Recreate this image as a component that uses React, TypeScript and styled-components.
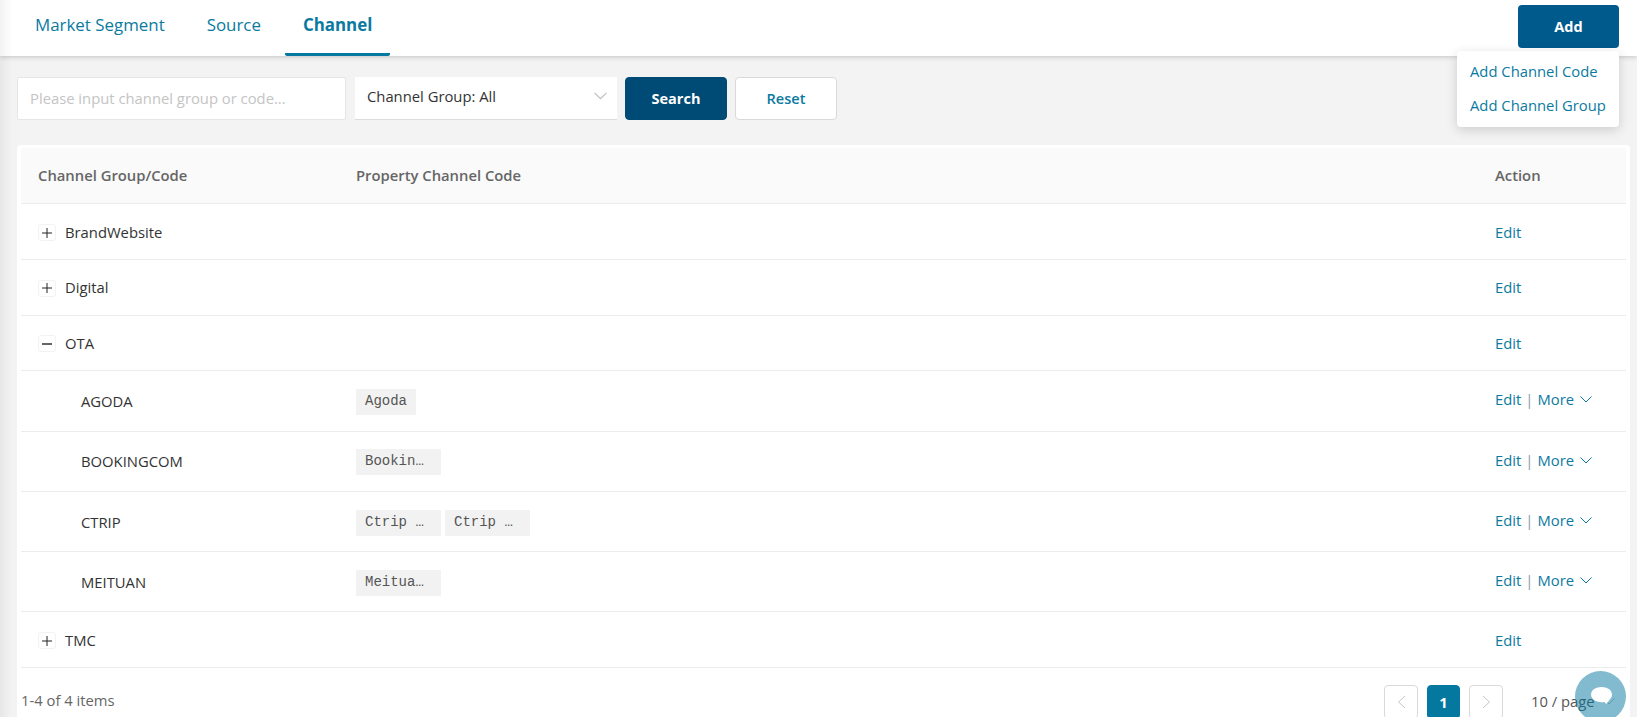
import React from 'react'
import styled, { createGlobalStyle } from 'styled-components'

const GlobalStyle = createGlobalStyle`
  html, body {
    margin: 0;
    padding: 0;
    background: #f3f3f3;
  }
  body {
    font-family: "Open Sans", "Liberation Sans", sans-serif;
    font-size: 14.8px;
    color: #333;
  }
`

const Page = styled.div`
  position: relative;
  height: 717px;
  overflow: hidden;
  background: #f3f3f3;

  &::after {
    content: "";
    position: absolute;
    top: 0;
    bottom: 0;
    left: 0;
    width: 12px;
    background: linear-gradient(to right, rgba(0, 0, 0, 0.05), transparent);
    pointer-events: none;
  }
`

const TopBar = styled.div`
  display: flex;
  justify-content: space-between;
  height: 56px;
  padding: 0 18px 0 17px;
  background: #fff;
  box-shadow: 0 1px 5px rgba(0, 0, 0, 0.2);
`

const Tabs = styled.div`
  display: flex;
  gap: 6px;
`

const Tab = styled.div<{ $active?: boolean }>`
  display: flex;
  align-items: flex-start;
  padding: 14px 18px 0;
  height: 56px;
  box-sizing: border-box;
  font-size: 16.9px;
  line-height: 22px;
  font-weight: ${p => (p.$active ? 700 : 400)};
  color: #0b7aa1;
  border-bottom: 3px solid ${p => (p.$active ? '#05789f' : 'transparent')};
  border-radius: 0 0 2px 2px;
`

const AddButton = styled.button`
  width: 101px;
  height: 43px;
  margin-top: 5px;
  border: 0;
  border-radius: 4px;
  background: #005a8c;
  color: #fff;
  font: 700 14.5px "Open Sans", sans-serif;
`

const Menu = styled.div`
  position: absolute;
  top: 51px;
  right: 18px;
  width: 162px;
  height: 76px;
  padding: 3px 0 0;
  box-sizing: border-box;
  background: #fff;
  border-radius: 4px;
  box-shadow: 0 3px 12px rgba(0, 0, 0, 0.16);
`

const MenuItem = styled.div`
  height: 34px;
  padding-left: 13px;
  line-height: 34px;
  color: #0b7aa1;
  white-space: nowrap;
`

const Filters = styled.div`
  display: flex;
  align-items: flex-start;
  margin: 21px 0 0 17px;
  height: 43px;
`

const SearchInput = styled.div`
  width: 329px;
  height: 43px;
  box-sizing: border-box;
  padding-left: 12px;
  line-height: 41px;
  background: #fff;
  border: 1px solid #e6e6e6;
  border-radius: 2px;
  color: #c4c4c4;
`

const Select = styled.div`
  display: flex;
  align-items: center;
  justify-content: space-between;
  width: 262px;
  height: 43px;
  margin-left: 9px;
  box-sizing: border-box;
  padding: 0 10px 5px 12px;
  background: #fff;
  border-bottom: 1px solid #dcdcdc;
`

const ActionButton = styled.button<{ $primary?: boolean }>`
  width: 102px;
  height: 43px;
  margin-left: 8px;
  box-sizing: border-box;
  border-radius: 4px;
  border: 1px solid ${p => (p.$primary ? '#004b75' : '#d9d9d9')};
  background: ${p => (p.$primary ? '#004b75' : '#fff')};
  color: ${p => (p.$primary ? '#fff' : '#0b7aa1')};
  font: ${p => (p.$primary ? 700 : 600)} 14.5px "Open Sans", sans-serif;
`

const Card = styled.div`
  margin: 25px 7px 0 17px;
  padding: 3px 4px 0;
  background: #fff;
  border-radius: 4px;
  height: 600px;
`

const HeadRow = styled.div`
  display: grid;
  grid-template-columns: 318px 1fr 131px;
  align-items: center;
  height: 55.5px;
  margin-bottom: 1px;
  padding: 0 0 1px 17px;
  box-sizing: border-box;
  background: #fafafa;
  border-bottom: 1px solid #ececec;
  font-weight: 600;
  color: #666;
`

const Row = styled.div<{ $tall?: boolean }>`
  display: grid;
  grid-template-columns: 318px 1fr 131px;
  align-items: center;
  height: ${p => (p.$tall ? 60.3 : 55.6)}px;
  padding-left: 17px;
  box-sizing: border-box;
  border-bottom: 1px solid #ececec;
`

const GroupName = styled.div`
  display: flex;
  align-items: center;
  gap: 9px;
`

const ExpandIcon = styled.span`
  display: flex;
  align-items: center;
  justify-content: center;
  width: 18px;
  height: 17px;
  border: 1px solid #f2f2f2;
  border-radius: 3px;
  box-sizing: border-box;
  margin-top: 2px;
`

const CodeName = styled.div`
  padding-left: 43px;
`

const Tags = styled.div`
  display: flex;
  gap: 4px;
  padding-top: 2px;
`

const Tag = styled.code<{ $cut?: boolean }>`
  width: ${p => (p.$cut ? '85px' : 'auto')};
  height: 26px;
  box-sizing: border-box;
  padding: 0 9px;
  line-height: 25px;
  background: #f2f2f2;
  font-family: "Liberation Mono", monospace;
  font-size: 14px;
  color: #555;
  white-space: nowrap;
`

const Actions = styled.div<{ $raised?: boolean }>`
  display: flex;
  align-items: center;
  padding-bottom: ${p => (p.$raised ? 3 : 0)}px;
  color: #0b7aa1;
`

const Divider = styled.span`
  margin: 0 4px;
  color: #8a9aa5;
`

const MoreIcon = styled.span`
  display: flex;
  margin-left: 6px;
`

const Footer = styled.div`
  display: flex;
  align-items: center;
  justify-content: space-between;
  padding-top: 16px;
  color: #666;
`

const Total = styled.div`
  padding-bottom: 4px;
`

const Pager = styled.div`
  display: flex;
  align-items: center;
`

const PageButton = styled.div<{ $active?: boolean }>`
  display: flex;
  align-items: center;
  justify-content: center;
  width: ${p => (p.$active ? 33 : 34)}px;
  height: 34px;
  margin-right: 9px;
  box-sizing: border-box;
  border: 1px solid ${p => (p.$active ? '#05789f' : '#d9d9d9')};
  border-radius: 4px;
  background: ${p => (p.$active ? '#05789f' : '#fff')};
  color: #fff;
  font-weight: 700;
`

const PageSize = styled.div`
  display: flex;
  align-items: center;
  gap: 8px;
  width: 95px;
  margin-left: 19px;
  padding-bottom: 2px;
  line-height: 34px;
  color: #555;
`

const ChatBubble = styled.div`
  position: absolute;
  left: 1575px;
  top: 671px;
  display: flex;
  align-items: flex-start;
  justify-content: center;
  width: 51px;
  height: 51px;
  padding: 16px 0 0 2px;
  box-sizing: border-box;
  border-radius: 50%;
  background: rgba(5, 120, 159, 0.5);
`

const Chevron = ({ color = '#0b7aa1', size = 12 }: { color?: string, size?: number }) => (
  <svg width={size} height={size} viewBox="0 0 12 12" fill="none">
    <path d="M0.5 3.5 L6 9 L11.5 3.5" stroke={color} strokeWidth="1" />
  </svg>
)

const PlusIcon = () => (
  <svg width="12" height="12" viewBox="0 0 12 12">
    <path d="M1 6 H11 M6 1 V11" stroke="#222" strokeWidth="1" />
  </svg>
)

const MinusIcon = () => (
  <svg width="12" height="12" viewBox="0 0 12 12">
    <path d="M1 6 H11" stroke="#222" strokeWidth="1.4" />
  </svg>
)

const Arrow = ({ left }: { left?: boolean }) => (
  <svg width="9" height="14" viewBox="0 0 9 14" fill="none">
    <path d={left ? 'M8 1 L1.5 7 L8 13' : 'M1 1 L7.5 7 L1 13'} stroke="#c4c4c4" strokeWidth="1" />
  </svg>
)

type TRow = { name: string, tags?: string[], child?: boolean, open?: boolean }

const rows: TRow[] = [
  { name: 'BrandWebsite' },
  { name: 'Digital' },
  { name: 'OTA', open: true },
  { name: 'AGODA', child: true, tags: ['Agoda'] },
  { name: 'BOOKINGCOM', child: true, tags: ['Bookin…'] },
  { name: 'CTRIP', child: true, tags: ['Ctrip …', 'Ctrip …'] },
  { name: 'MEITUAN', child: true, tags: ['Meitua…'] },
  { name: 'TMC' },
]

function App() {
  return (
    <Page>
      <GlobalStyle />
      <TopBar>
        <Tabs>
          <Tab>Market Segment</Tab>
          <Tab>Source</Tab>
          <Tab $active>Channel</Tab>
        </Tabs>
        <AddButton>Add</AddButton>
      </TopBar>
      <Menu>
        <MenuItem>Add Channel Code</MenuItem>
        <MenuItem>Add Channel Group</MenuItem>
      </Menu>
      <Filters>
        <SearchInput>Please input channel group or code...</SearchInput>
        <Select>
          Channel Group: All
          <Chevron color="#bdbdbd" size={13} />
        </Select>
        <ActionButton $primary>Search</ActionButton>
        <ActionButton>Reset</ActionButton>
      </Filters>
      <Card>
        <HeadRow>
          <div>Channel Group/Code</div>
          <div>Property Channel Code</div>
          <div>Action</div>
        </HeadRow>
        {rows.map(row => (
          <Row key={row.name} $tall={row.child}>
            {row.child ? (
              <CodeName>{row.name}</CodeName>
            ) : (
              <GroupName>
                <ExpandIcon>{row.open ? <MinusIcon /> : <PlusIcon />}</ExpandIcon>
                {row.name}
              </GroupName>
            )}
            <Tags>
              {row.tags?.map((tag, i) => <Tag key={i} $cut={tag.endsWith('…')}>{tag}</Tag>)}
            </Tags>
            <Actions $raised={row.child}>
              Edit
              {row.child && (
                <>
                  <Divider>|</Divider>
                  More
                  <MoreIcon><Chevron /></MoreIcon>
                </>
              )}
            </Actions>
          </Row>
        ))}
        <Footer>
          <Total>1-4 of 4 items</Total>
          <Pager>
            <PageButton><Arrow left /></PageButton>
            <PageButton $active>1</PageButton>
            <PageButton><Arrow /></PageButton>
            <PageSize>
              10 / page
              <Chevron color="#bdbdbd" />
            </PageSize>
          </Pager>
        </Footer>
      </Card>
      <ChatBubble>
        <svg width="22" height="19" viewBox="0 0 23 20">
          <path d="M11 0 C17 0 22 3 22 8 C22 10 21 12 19.5 13.5 L16 18 L14 15.8 C13 16 12 16 11 16 C5 16 0 13 0 8 C0 3 5 0 11 0 Z" fill="#fff" />
        </svg>
      </ChatBubble>
    </Page>
  )
}

export default App
